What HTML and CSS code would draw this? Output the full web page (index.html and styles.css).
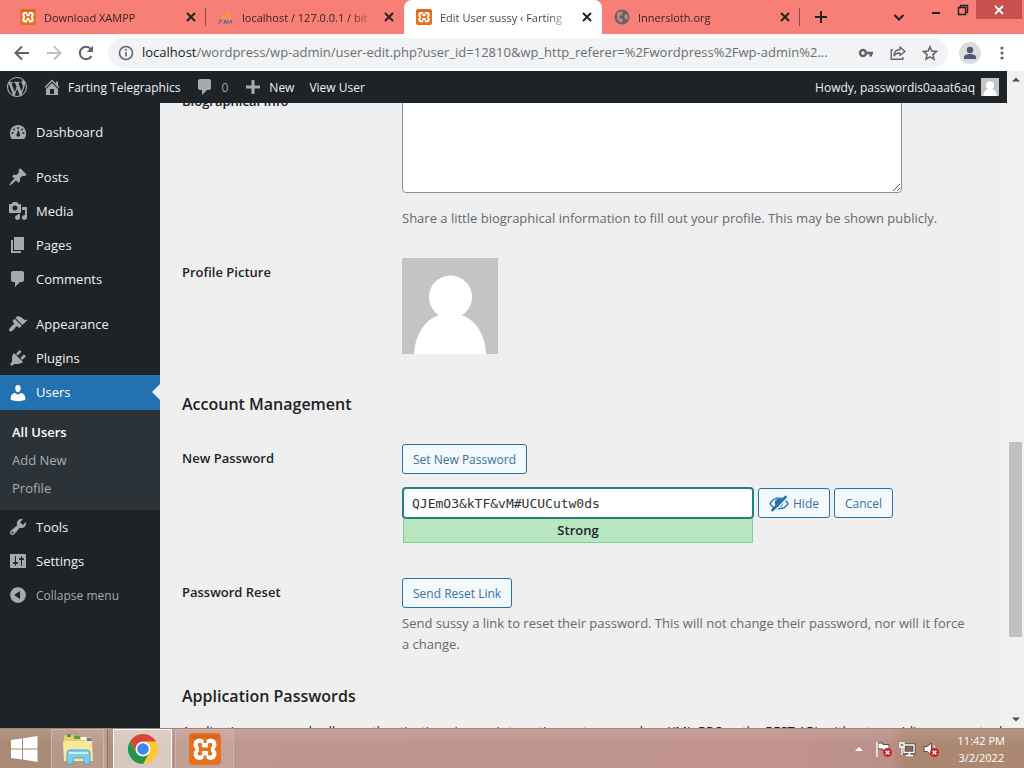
FILE: index.html
```html
<!DOCTYPE html>
<html lang="en">
<head>
<meta charset="utf-8">
<title>Edit User sussy ‹ Farting Telegraphics</title>
<link rel="stylesheet" href="styles.css">
</head>
<body>
<svg class="defs" aria-hidden="true">
  <symbol id="close" viewBox="0 0 10 10"><path d="M1 1l8 8M9 1L1 9" stroke="currentColor" stroke-width="2" fill="none"/></symbol>
  <symbol id="xampp" viewBox="0 0 32 32"><rect width="32" height="32" rx="4" fill="#e8701c"/><path d="M2 2h28v4H2z" fill="#c75a12" opacity=".5"/><g fill="#fff"><circle cx="10.500" cy="11.500" r="6"/><circle cx="21.500" cy="11.500" r="6"/><circle cx="10.500" cy="21" r="6"/><circle cx="21.500" cy="21" r="6"/><path d="M8 11h16v10H8z"/></g><g fill="#e8701c"><circle cx="11" cy="12" r="2.300"/><circle cx="11" cy="20.500" r="2.300"/><circle cx="21" cy="12" r="2.300"/><circle cx="21" cy="20.500" r="2.300"/><path d="M10 12l4 2.500h4l4-2.500v8.500L18 18h-4l-4 2.500z"/><path d="M14.500 4h3v6h-3zM14.500 22.500h3V28h-3z"/></g><path d="M3 14l3 2.300L3 18.500zM29 14l-3 2.300 3 2.200z" fill="#e8701c"/></symbol>
  <symbol id="comment" viewBox="0 0 20 20"><path d="M5 2h9c1.100 0 2 .9 2 2v7c0 1.100-.9 2-2 2h-2l-5 5v-5H5c-1.100 0-2-.9-2-2V4c0-1.100.9-2 2-2z"/></symbol>
  <symbol id="person" viewBox="0 0 96 96"><path fill="#c4c4c4" d="M0 0h96v96H0z"/><circle cx="48.500" cy="39" r="21.500" fill="#fff"/><path d="M12 96c1-20 12-35 25-39h22c14 4 24 19 25 39z" fill="#fff"/></symbol>
  <symbol id="error" viewBox="0 0 10 10"><circle cx="5" cy="5" r="5" fill="#c9252d"/><path d="M3 3l4 4M7 3L3 7" stroke="#fff" stroke-width="1.500"/></symbol>
</svg>

<header class="tabstrip">
  <nav class="tabs" aria-label="Tabs">
    <div class="tab"><svg class="favicon"><use href="#xampp"/></svg><span class="tab-title">Download XAMPP</span><button class="tab-close" aria-label="Close tab"><svg><use href="#close"/></svg></button></div>
    <div class="tab"><svg class="favicon" viewBox="0 0 16 16"><path d="M2 10L7 3v7zM8 10V2c3 2 5 5 6 8z" fill="#f79646"/><path d="M1 15l1-4h2l-1 2M6 15l1-4 1 3 2-3-1 4M11 15l2-4 1 4" fill="none" stroke="#666489"/></svg><span class="tab-title">localhost / 127.0.0.1 / bit</span><button class="tab-close" aria-label="Close tab"><svg><use href="#close"/></svg></button></div>
    <div class="tab active"><svg class="favicon"><use href="#xampp"/></svg><span class="tab-title">Edit User sussy ‹ Farting</span><button class="tab-close" aria-label="Close tab"><svg><use href="#close"/></svg></button></div>
    <div class="tab"><svg class="favicon" viewBox="0 0 16 16"><circle cx="8" cy="8" r="7.500" fill="#5f6368"/><path d="M3 4c2-1 4-2 6-1l-1 3-3 1 1 2 3 1-1 4C5 13 2 10 3 8zM11 5l3 1v4l-2 1-2-3z" fill="#c98079"/></svg><span class="tab-title">Innersloth.org</span><button class="tab-close" aria-label="Close tab"><svg><use href="#close"/></svg></button></div>
  </nav>
  <button class="new-tab" aria-label="New tab"><svg viewBox="0 0 12 12"><path d="M6 0v12M0 6h12" stroke="currentColor" stroke-width="2"/></svg></button>
  <button class="tab-search" aria-label="Search tabs"><svg viewBox="0 0 12 12"><path d="M1.500 4L6 8.500 10.500 4" fill="none" stroke="currentColor" stroke-width="2"/></svg></button>
  <div class="window-controls">
    <button aria-label="Minimize"><svg viewBox="0 0 12 12"><path d="M2 9h8" stroke="currentColor" stroke-width="2"/></svg></button>
    <button aria-label="Restore"><svg viewBox="0 0 12 12"><path d="M1.500 3.500h7v7h-7zM3.500 3V1.500h7v7H9" fill="none" stroke="currentColor" stroke-width="1.400"/></svg></button>
    <button class="window-close" aria-label="Close"><svg viewBox="0 0 12 12"><path d="M2 2l8 8M10 2l-8 8" stroke="currentColor" stroke-width="1.800"/></svg></button>
  </div>
</header>

<div class="toolbar">
  <button aria-label="Back"><svg viewBox="0 0 16 16"><path d="M15 8H2M8 1.500L1.500 8 8 14.500" fill="none" stroke="#5f6368" stroke-width="2"/></svg></button>
  <button aria-label="Forward"><svg viewBox="0 0 16 16"><path d="M1 8h13M8 1.500L14.500 8 8 14.500" fill="none" stroke="#bdc1c6" stroke-width="2"/></svg></button>
  <button aria-label="Reload"><svg viewBox="0 0 16 16"><path d="M13.500 11A6.200 6.200 0 1 1 12.800 4" fill="none" stroke="#5f6368" stroke-width="2"/><path d="M15 .8v6.200H8.800z" fill="#5f6368"/></svg></button>
  <div class="omnibox">
    <svg class="info" viewBox="0 0 16 16"><circle cx="8" cy="8" r="6.500" fill="none" stroke="#5f6368" stroke-width="1.500"/><path d="M8 7v4.500M8 4v1.700" stroke="#5f6368" stroke-width="1.600"/></svg>
    <div class="url"><span class="host">localhost</span>/wordpress/wp-admin/user-edit.php?user_id=12810&amp;wp_http_referer=%2Fwordpress%2Fwp-admin%2...</div>
    <button aria-label="Passwords"><svg viewBox="0 0 16 16"><circle cx="5" cy="8" r="3" fill="none" stroke="#5f6368" stroke-width="2.400"/><path d="M8 8h7M12.800 8v3.500" stroke="#5f6368" stroke-width="2.600"/></svg></button>
    <button aria-label="Share"><svg viewBox="0 0 16 16"><path d="M3 5H1.200v9.300h11.600V12" fill="none" stroke="#5f6368" stroke-width="1.400"/><path d="M10 2l5 4.500-5 4V8C7 8 5 9 4 11c0-4 2.500-6.300 6-6.500z" fill="none" stroke="#5f6368" stroke-width="1.300" stroke-linejoin="round"/></svg></button>
    <button aria-label="Bookmark"><svg viewBox="0 0 16 16"><path d="M8 1.800l1.800 4.300 4.700.4-3.600 3.100 1.100 4.600L8 11.800l-4 2.400 1.100-4.600L1.500 6.500l4.700-.4z" fill="none" stroke="#5f6368" stroke-width="1.500"/></svg></button>
  </div>
  <button class="profile" aria-label="Profile"><svg viewBox="0 0 22 22"><circle cx="11" cy="11" r="11" fill="#dadce0"/><circle cx="11" cy="8" r="3.200" fill="#4d5a73"/><path d="M5 17v-2c0-2 3-3 6-3s6 1 6 3v2z" fill="#4d5a73"/></svg></button>
  <button aria-label="Menu"><svg viewBox="0 0 16 16"><g fill="#5f6368"><circle cx="8" cy="3" r="1.600"/><circle cx="8" cy="8" r="1.600"/><circle cx="8" cy="13" r="1.600"/></g></svg></button>
</div>

<div class="viewport">
  <div class="page">
    <nav class="adminbar" aria-label="Toolbar">
      <a href="#" aria-label="About WordPress"><svg viewBox="0 0 20 20"><path d="M20 10c0-5.510-4.490-10-10-10C4.480 0 0 4.490 0 10c0 5.520 4.480 10 10 10 5.510 0 10-4.480 10-10zM7.780 15.370L4.370 6.220c.55-.02 1.170-.08 1.170-.08.5-.06.44-1.130-.06-1.110 0 0-1.450.11-2.370.11-.18 0-.37 0-.58-.01C4.120 2.690 6.870 1.110 10 1.110c2.330 0 4.450.87 6.050 2.340-.68-.11-1.650.39-1.650 1.580 0 .74.45 1.360.9 2.100.35.61.55 1.360.55 2.460 0 1.490-1.400 5-1.400 5l-3.030-8.370c.54-.02.82-.17.82-.17.5-.05.44-1.250-.06-1.220 0 0-1.440.12-2.380.12-.87 0-2.330-.12-2.330-.12-.5-.03-.56 1.200-.06 1.220l.92.08 1.260 3.410zM17.410 10c.24-.64.74-1.870.43-4.250.7 1.290 1.050 2.710 1.050 4.250 0 3.290-1.730 6.240-4.400 7.780.97-2.590 1.940-5.200 2.920-7.780zM6.100 18.090C3.120 16.650 1.110 13.530 1.110 10c0-1.300.23-2.480.72-3.590C3.250 10.300 4.670 14.200 6.100 18.090zm4.030-6.630l2.580 6.980c-.86.29-1.760.45-2.710.45-.79 0-1.570-.11-2.290-.33.81-2.380 1.620-4.740 2.420-7.100z"/></svg></a>
      <a href="#"><svg viewBox="0 0 20 20"><path d="M16 8.500l1.530 1.530-1.060 1.060L10 4.600l-6.470 6.490-1.060-1.060L10 2.500l4 4v-2h2v4zm-6-2.460l6 5.990V18H4v-5.970zM12 17v-5H8v5h4z"/></svg>Farting Telegraphics</a>
      <a href="#" class="muted"><svg><use href="#comment"/></svg>0</a>
      <a href="#"><svg viewBox="0 0 20 20"><path d="M17 8.500v3h-5.500V17h-3v-5.500H3v-3h5.500V3h3v5.500z"/></svg>New</a>
      <a href="#">View User</a>
      <a href="#" class="account">Howdy, passwordis0aaat6aq<svg><use href="#person"/></svg></a>
    </nav>

    <nav class="sidebar" aria-label="Main menu">
      <ul class="menu">
        <li><a href="#"><svg viewBox="0 0 20 20"><path d="M3.760 17h12.480c1.340-1.630 1.760-3.730 1.760-6 0-4.420-3.580-8-8-8s-8 3.580-8 8c0 2.270.42 4.370 1.760 6z"/><g fill="#1d2327"><circle cx="10" cy="6" r="1"/><circle cx="6" cy="7.500" r="1"/><circle cx="14" cy="7.500" r="1"/><circle cx="4.500" cy="11" r="1"/><circle cx="15.500" cy="11" r="1"/><path d="M10.500 7.500l1.500 5c.5 3-4 3-3.500 0z"/></g></svg>Dashboard</a></li>
        <li class="group"><a href="#"><svg viewBox="0 0 20 20"><path d="M10.440 3.020l1.820-1.820 6.360 6.350-1.830 1.820c-1.050-.68-2.480-.57-3.410.36l-.75.75c-.92.93-1.040 2.350-.35 3.410l-1.830 1.820-2.410-2.410-2.800 2.790c-.42.42-3.380 2.710-3.800 2.290s1.860-3.390 2.280-3.810l2.790-2.790L4.100 9.360l1.830-1.820c1.050.69 2.480.57 3.400-.36l.75-.75c.93-.92 1.050-2.350.36-3.410z"/></svg>Posts</a></li>
        <li><a href="#"><svg viewBox="0 0 20 20"><path fill-rule="evenodd" d="M13 11V4c0-.55-.45-1-1-1h-1.670L9 1H5L3.670 3H2c-.55 0-1 .45-1 1v7c0 .55.45 1 1 1h10c.55 0 1-.45 1-1zM7 4.500c1.380 0 2.500 1.120 2.500 2.500S8.380 9.500 7 9.500 4.500 8.380 4.500 7 5.620 4.500 7 4.500zM14 6h5v10.500c0 1.380-1.120 2.500-2.500 2.500S14 17.880 14 16.500s1.120-2.500 2.500-2.500c.17 0 .34.02.5.05V9h-3V6zm-4 8.050V13h2v3.500c0 1.380-1.120 2.500-2.500 2.500S7 17.880 7 16.500 8.120 14 9.500 14c.17 0 .34.02.5.05z"/></svg>Media</a></li>
        <li><a href="#"><svg viewBox="0 0 20 20"><path d="M6 15V2h10v13H6zm-1 1h8v2H3V5h2v11z"/></svg>Pages</a></li>
        <li><a href="#"><svg><use href="#comment"/></svg>Comments</a></li>
        <li class="group"><a href="#"><svg viewBox="0 0 20 20"><path d="M14.480 11.060L7.410 3.990l1.500-1.500c.5-.56 2.300-.47 3.510.32 1.210.8 1.430 1.280 2.910 2.100 1.180.64 2.450 1.260 4.450.85zm-.71.71L6.700 4.700 4.930 6.470c-.39.39-.39 1.020 0 1.410l1.060 1.060c.39.39.39 1.030 0 1.420-.6.6-1.430 1.110-2.210 1.690-.35.26-.7.53-1.010.84C1.430 14.230.4 16.080 1.400 17.070c.99 1 2.840-.03 4.180-1.360.31-.31.58-.66.85-1.020.57-.78 1.080-1.610 1.690-2.210.39-.39 1.020-.39 1.410 0l1.060 1.060c.39.39 1.020.39 1.410 0z"/></svg>Appearance</a></li>
        <li><a href="#"><svg viewBox="0 0 20 20"><path d="M13.110 4.360L9.870 7.600 8 5.730l3.240-3.240c.35-.34 1.050-.2 1.560.32.52.51.66 1.210.31 1.550zm-8 1.770l.91-1.120 9.010 9.010-1.190.84c-.71.71-2.630 1.160-3.820 1.160H6.140L4.900 17.260c-.59.59-1.540.59-2.120 0-.59-.58-.59-1.530 0-2.120l1.240-1.240v-3.880c0-1.130.4-3.190 1.090-3.890zm7.260 3.970l3.240-3.240c.34-.35 1.040-.21 1.550.31.52.51.66 1.210.31 1.550l-3.240 3.250z"/></svg>Plugins</a></li>
        <li class="current"><a href="#"><svg viewBox="0 0 20 20"><path d="M10 9.250c-2.270 0-2.730-3.440-2.730-3.440C7 4.020 7.820 2 9.970 2c2.160 0 2.980 2.020 2.710 3.810 0 0-.41 3.440-2.680 3.440zm0 2.570L12.720 10c2.390 0 4.520 2.330 4.520 4.530v2.490s-3.650 1.130-7.240 1.130c-3.650 0-7.240-1.130-7.240-1.130v-2.490c0-2.250 1.940-4.480 4.470-4.480z"/></svg>Users</a>
          <ul class="submenu">
            <li><a href="#" class="selected">All Users</a></li>
            <li><a href="#">Add New</a></li>
            <li><a href="#">Profile</a></li>
          </ul>
        </li>
        <li><a href="#"><svg viewBox="0 0 20 20"><path d="M16.680 9.770c-1.340 1.340-3.300 1.670-4.950.99l-5.410 6.520c-.99.99-2.590.99-3.580 0s-.99-2.590 0-3.570l6.520-5.420c-.68-1.650-.35-3.610.99-4.950 1.280-1.280 3.120-1.620 4.720-1.060l-2.890 2.890 2.820 2.820 2.860-2.870c.53 1.580.18 3.390-1.080 4.650zM3.810 16.210c.4.39 1.040.39 1.430 0 .4-.4.4-1.040 0-1.430-.39-.4-1.030-.4-1.430 0-.39.39-.39 1.030 0 1.430z"/></svg>Tools</a></li>
        <li><a href="#"><svg viewBox="0 0 20 20"><path fill-rule="evenodd" d="M18 16V4c0-.55-.45-1-1-1H3c-.55 0-1 .45-1 1v12c0 .55.45 1 1 1h14c.55 0 1-.45 1-1zM8 11h1c.55 0 1 .45 1 1s-.45 1-1 1H8v1.500c0 .28-.22.5-.5.5s-.5-.22-.5-.5V13H6c-.55 0-1-.45-1-1s.45-1 1-1h1V5.500c0-.28.22-.5.5-.5s.5.22.5.5V11zm5-2h-1c-.55 0-1-.45-1-1s.45-1 1-1h1V5.500c0-.28.22-.5.5-.5s.5.22.5.5V7h1c.55 0 1 .45 1 1s-.45 1-1 1h-1v5.500c0 .28-.22.5-.5.5s-.5-.22-.5-.5V9z"/></svg>Settings</a></li>
        <li><button class="collapse"><svg viewBox="0 0 20 20"><path fill-rule="evenodd" d="M10 2.160c4.330 0 7.840 3.510 7.840 7.840s-3.510 7.840-7.840 7.840S2.160 14.330 2.160 10 5.670 2.160 10 2.160zm2 11.720V6.120L6.180 9.970z"/></svg>Collapse menu</button></li>
      </ul>
    </nav>

    <main class="content">
      <form class="user-form">
        <div class="row bio">
          <label for="bio">Biographical Info</label>
          <div class="field"><textarea id="bio"></textarea><p class="description">Share a little biographical information to fill out your profile. This may be shown publicly.</p></div>
        </div>
        <div class="row picture">
          <span class="label">Profile Picture</span>
          <div class="field"><svg class="avatar" role="img" aria-label="Avatar"><use href="#person"/></svg></div>
        </div>
        <h2>Account Management</h2>
        <div class="row password">
          <label for="pass">New Password</label>
          <div class="field">
            <button type="button" class="button">Set New Password</button>
            <div class="password-line">
              <div class="password-box"><input id="pass" type="text" value="QJEmO3&amp;kTF&amp;vM#UCUCutw0ds"><div class="strength">Strong</div></div>
              <button type="button" class="button"><svg viewBox="0 0 20 20"><path d="M1 10.600c1.800-3.500 5-5.500 9-5.500s7.200 2 9 5.500c-1.800 3.200-5 5.200-9 5.200s-7.200-2-9-5.200z" fill="none" stroke="currentColor" stroke-width="1.300"/><circle cx="10" cy="10" r="4.200" fill="currentColor"/><path d="M6 18L18 5" stroke="#f3f9fc" stroke-width="1.500"/><path d="M3.500 17L16.500 4" stroke="currentColor" stroke-width="2.600" stroke-linecap="round"/></svg>Hide</button>
              <button type="button" class="button">Cancel</button>
            </div>
          </div>
        </div>
        <div class="row reset">
          <span class="label">Password Reset</span>
          <div class="field"><button type="button" class="button">Send Reset Link</button><p class="description">Send sussy a link to reset their password. This will not change their password, nor will it force a change.</p></div>
        </div>
        <h2>Application Passwords</h2>
        <p class="intro">Application passwords allow authentication via non-interactive systems, such as XML-RPC or the REST API, without providing your actual password.</p>
      </form>
    </main>
  </div>
  <div class="scrollbar" aria-hidden="true">
    <svg viewBox="0 0 17 17"><path d="M5 10.500h8l-4-4z" fill="#505050"/></svg>
    <div class="track"><div class="thumb"></div></div>
    <svg viewBox="0 0 17 17"><path d="M5 6.500h8l-4 4z" fill="#505050"/></svg>
  </div>
</div>

<footer class="taskbar">
  <button class="start" aria-label="Start"><svg viewBox="0 0 28 26"><path d="M1 4l11-1.600V12.400H1zM13 2.200L27.500 0v12.400H13zM1 13.400h11v10L1 22zM13 13.400h14.500V26L13 23.600z" fill="#fff"/></svg></button>
  <button class="task explorer" aria-label="File Explorer"><svg viewBox="0 0 32 32"><path d="M2 4l1-2h8l1 2h17v23H2z" fill="#e9cf74"/><path d="M5 1h4v3H5zM12 3h6v3h-6z" fill="#5d9c4a"/><path d="M19 4h5v3h-5z" fill="#f8f8ef"/><path d="M25 5h4v3h-4z" fill="#4d83b5"/><path d="M1 8h29l1 20H2z" fill="#f8e89c"/><path d="M5 31V20q0-3 3-3h17q3 0 3 3v11h-6v-6H11v6z" fill="#80cbed" stroke="#4ba5d2"/><path d="M7 20h19" stroke="#c9effc" stroke-width="2"/></svg></button>
  <button class="task running" aria-label="Google Chrome"><svg viewBox="0 0 32 32"><circle cx="16" cy="16" r="15" fill="#fcc934"/><path d="M3 8.500A15 15 0 0 1 29 8.500H16a7.500 7.500 0 0 0-6.500 11.200z" fill="#d8453a"/><path d="M3 8.500A15 15 0 0 0 16 31l6.500-11.200A7.500 7.500 0 0 1 9.500 19.700z" fill="#23934f"/><circle cx="16" cy="16" r="7.300" fill="#fff"/><circle cx="16" cy="16" r="5.800" fill="#4285f4"/></svg></button>
  <button class="task" aria-label="XAMPP"><svg><use href="#xampp"/></svg></button>
  <div class="tray">
    <button aria-label="Show hidden icons"><svg viewBox="0 0 18 18"><path d="M5 11h8L9 7z" fill="#fff"/></svg></button>
    <button aria-label="Action Center"><svg viewBox="0 0 18 18"><path d="M3 2v15M4 3h5v1.500h6V11H9V9H4z" fill="#fff" stroke="#5a4640"/><path d="M3 2v15" stroke="#fff" stroke-width="1.500"/><use href="#error" x="9" y="8" width="9" height="9"/></svg></button>
    <button aria-label="Network"><svg viewBox="0 0 18 18"><path d="M6 5h10v8H6z" fill="#7c6a5e" stroke="#4c3f39" stroke-width="3"/><path d="M6 5h10v7.500H6zM8 15.500h7M11.500 13v2" fill="none" stroke="#fff" stroke-width="1.400"/><path d="M2 3h4v4H2zM4 7v8" fill="#8b7a6e" stroke="#fff" stroke-width="1.300"/></svg></button>
    <button aria-label="Volume"><svg viewBox="0 0 18 18"><path d="M2 6.500h3L9.500 3v12L5 11.500H2z" fill="#fff" stroke="#5a4640"/><path d="M11.500 5q2 2 1 4" fill="none" stroke="#fff"/><use href="#error" x="8" y="8" width="9" height="9"/></svg></button>
    <div class="clock"><span>11:42 PM</span><span>3/2/2022</span></div>
  </div>
</footer>
</body>
</html>
```
FILE: styles.css
```css
* { box-sizing: border-box; }
body {
  margin: 0;
  height: 100vh;
  display: flex;
  flex-direction: column;
  overflow: hidden;
  font: 13px/21px "Open Sans", "Noto Sans", sans-serif;
  color: #1d2327;
}
button { font: inherit; color: inherit; background: none; border: 0; padding: 0; display: flex; align-items: center; justify-content: center; }
a { color: inherit; text-decoration: none; }
ul { list-style: none; margin: 0; padding: 0; }
p, h2 { margin: 0; }
svg { display: block; flex: none; fill: currentColor; }
.defs { position: absolute; width: 0; height: 0; }

/* Tab strip */
.tabstrip { display: flex; flex: none; height: 34px; padding-left: 8px; background: #f77f78; color: #3c2322; }
.tabs { display: flex; flex: 0 1 792px; min-width: 0; }
.tab {
  display: flex;
  flex: 1 1 0;
  min-width: 0;
  align-items: center;
  gap: 8px;
  padding: 0 8px 0 12px;
  font-size: 11px;
  background: linear-gradient(#8d4a48, #8d4a48) right / 1px 18px no-repeat;
}
.tab:has(+ .active) { background: none; }
.tab.active { background: #fff; border-radius: 8px 8px 0 0; color: #45474a; }
.favicon { width: 16px; height: 16px; }
.tab-title { flex: 1; overflow: hidden; white-space: nowrap; mask-image: linear-gradient(to left, transparent, #000 24px); }
.tab-close { width: 14px; height: 14px; color: #222; }
.tab-close svg { width: 10px; height: 10px; }
.new-tab { width: 42px; color: #222; }
.new-tab svg, .tab-search svg, .window-controls svg { width: 12px; height: 12px; }
.tab-search { width: 30px; margin-left: auto; color: #222; }
.window-controls { display: flex; height: 19px; margin: 0 2px 0 8px; color: #222; }
.window-controls button { width: 27px; }
.window-controls .window-close { width: 46px; background: #c8504f; color: #fff; }

/* Address bar */
.toolbar { display: flex; flex: none; align-items: center; height: 37px; padding: 0 6px; background: #fff; }
.toolbar button { width: 32px; height: 30px; }
.toolbar svg { width: 16px; height: 16px; }
.omnibox { display: flex; flex: 1; min-width: 0; align-items: center; height: 30px; margin: 0 6px; padding: 0 2px 0 10px; border-radius: 15px; background: #f1f3f4; }
.url { flex: 1; min-width: 0; margin-left: 8px; overflow: hidden; white-space: nowrap; color: #6a6e73; }
.host { color: #202124; }
.toolbar .profile svg { width: 22px; height: 22px; }

/* Page */
.viewport { display: flex; flex: 1; min-height: 0; }
.page { display: grid; flex: 1; min-width: 0; grid-template: 32px minmax(0, 1fr) / 160px minmax(0, 1fr); background: #efefef; }
.adminbar { grid-column: 1 / -1; z-index: 1; display: flex; align-items: center; gap: 15px; padding: 0 8px 0 7px; background: #1d2327; color: #f0f0f1; font-size: 12px; }
.adminbar a { display: flex; align-items: center; gap: 6px; white-space: nowrap; }
.adminbar svg { width: 20px; height: 20px; fill: #a7aaad; }
.adminbar .muted { color: #9ca1a7; }
.adminbar .account { margin-left: auto; }
.adminbar .account svg { width: 18px; height: 18px; }

.sidebar { background: #1d2327; color: #f0f0f1; padding-top: 12px; }
.menu > li > a, .collapse { display: flex; align-items: center; gap: 8px; height: 34px; padding-left: 8px; }
.menu svg { width: 20px; height: 20px; fill: #a7aaad; }
.menu .group { padding-top: 11px; }
.menu .current > a { position: relative; height: 35px; background: #2271b1; color: #fff; }
.menu .current > a::after { content: ""; position: absolute; right: 0; top: 9px; border: 8px solid transparent; border-left: 0; border-right-color: #efefef; }
.menu .current svg { fill: #fff; }
.submenu { padding: 8px 12px; background: #2c3338; color: #a9acaf; }
.submenu a { display: block; line-height: 28px; }
.submenu .selected { color: #fff; font-weight: 600; }
.menu .collapse { color: #a7aaad; font-size: 12px; }

.content { overflow: hidden; padding: 0 22px; }
.user-form { margin-top: -35px; }
.row { display: grid; grid-template-columns: 220px minmax(0, 1fr); padding-top: 15px; }
.row label, .label { font-weight: 600; padding-top: 4px; }
.bio label { padding-top: 8px; }
.field { padding-right: 10px; }
textarea { display: block; width: 500px; max-width: 100%; height: 110px; border: 1px solid #8c8f94; border-radius: 4px; background: #fff; }
.description { color: #646970; }
.bio .description { margin-top: 15px; }
.picture { padding-top: 29px; }
.avatar { width: 96px; height: 96px; }
h2 { font-size: 16px; line-height: 24px; font-weight: 600; margin-bottom: 13px; }
.picture + h2 { margin-top: 38px; }
.reset + h2 { margin-top: 29px; }
.button { height: 30px; padding: 0 10px; border: 1px solid #2271b1; border-radius: 3px; background: #f3f9fc; color: #3c70a4; font-size: 12px; white-space: nowrap; }
.button svg { width: 20px; height: 20px; margin-right: 4px; color: #2271b1; }
.password-line { display: flex; align-items: flex-start; gap: 4px; margin-top: 13px; }
.password-line .button { margin-top: 1px; }
.password-box { flex: 0 1 352px; min-width: 0; }
#pass { display: block; width: 100%; height: 32px; padding: 0 8px; border: 2px solid #25807e; border-radius: 4px; background: #fff; color: #2c3338; font: 13px "DejaVu Sans Mono", monospace; outline: 0; }
.strength { margin: 0 1px; border: 1px solid #7fcf92; border-top: 0; background: #b8e6bf; line-height: 23px; text-align: center; font-weight: 600; }
.reset { padding-top: 35px; }
.reset .description { margin-top: 5px; }
.intro { white-space: nowrap; }

.scrollbar { display: flex; flex: none; flex-direction: column; width: 17px; background: #f1f1f1; }
.scrollbar svg { width: 17px; height: 17px; }
.track { flex: 1; display: flex; flex-direction: column; justify-content: flex-end; padding: 0 2px 74px; }
.thumb { height: 195px; background: #c1c1c1; }

/* Taskbar */
.taskbar { display: flex; flex: none; height: 40px; border-top: 1px solid #a38375; color: #fff; background: linear-gradient(#ffffff1c, transparent 40%), linear-gradient(90deg, #a98a75, #a98a75 50px, #be9790 240px, #c1938e 780px, #bb908a 890px, #ac8872 905px, #ac8872); }
.start { width: 48px; }
.start svg { width: 28px; height: 26px; }
.task { width: 59px; margin-left: 3px; border: 1px solid #d4b3a8; border-bottom: 0; background: #ffffff20; }
.task svg { width: 32px; height: 32px; }
.task.explorer { width: 53px; margin-right: 6px; box-shadow: 3px 0 #bc9f90, 4px 0 #8f7165; }
.task.running { border-color: #fff; background: #ffffff80; }
.tray { display: flex; align-items: center; margin-left: auto; padding-right: 19px; gap: 6px; }
.tray svg { width: 18px; height: 18px; }
.clock { display: flex; flex-direction: column; align-items: center; font-size: 11px; line-height: 17px; margin-left: 12px; }
```
